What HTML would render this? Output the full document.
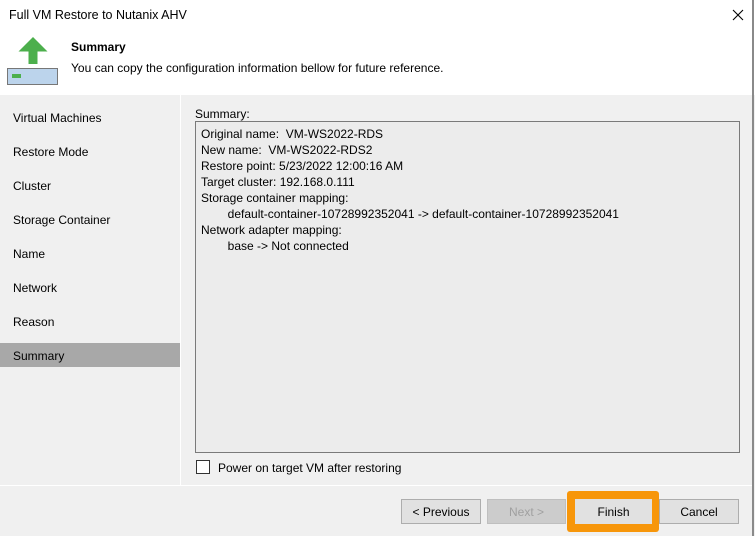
<!DOCTYPE html>
<html><head><style>
*{margin:0;padding:0;box-sizing:border-box}
body{width:755px;height:536px;overflow:hidden;background:#f0f0f0;font-family:"Liberation Sans",sans-serif;font-size:12px;color:#000;position:relative}
.a{position:absolute}
.nav div{position:absolute;left:13px}
.btn{position:absolute;top:499px;height:25px;border:1px solid #adadad;background:#e1e1e1;text-align:center;line-height:24px}
</style></head><body>
<div class="a" style="left:0;top:0;width:755px;height:95px;background:#fff"></div>
<div class="a" style="left:752px;top:0;width:2px;height:536px;background:#8a8a8a"></div>
<div class="a" style="left:9px;top:8px;font-size:12.5px">Full VM Restore to Nutanix AHV</div>
<svg class="a" style="left:731px;top:8px" width="14" height="14"><path d="M2 2L12 12M12 2L2 12" stroke="#000" stroke-width="1.1"/></svg>
<svg class="a" style="left:7px;top:36px" width="52" height="50">
<path d="M26 1L11.5 15.5H21.5V28H30.5V15.5H40.5Z" fill="#4caf4c"/>
<rect x="0.5" y="32.5" width="50" height="16" fill="#bcd4ec" stroke="#777"/>
<rect x="5" y="38" width="9" height="4" fill="#4caf4c"/>
</svg>
<div class="a" style="left:71px;top:40px;font-weight:bold">Summary</div>
<div class="a" style="left:71px;top:61px">You can copy the configuration information bellow for future reference.</div>
<div class="a" style="left:180px;top:95px;width:1px;height:390px;background:#fff"></div>
<div class="nav">
<div style="top:111px">Virtual Machines</div>
<div style="top:145px">Restore Mode</div>
<div style="top:179px">Cluster</div>
<div style="top:213px">Storage Container</div>
<div style="top:247px">Name</div>
<div style="top:281px">Network</div>
<div style="top:315px">Reason</div>
</div>
<div class="a" style="left:0;top:343px;width:180px;height:24px;background:#a8a8a8"></div>
<div class="a" style="left:13px;top:349px">Summary</div>
<div class="a" style="left:195px;top:107px">Summary:</div>
<div class="a" style="left:195px;top:121px;width:545px;height:332px;border:1px solid #7a7a7a;background:#ececec;line-height:16px;padding:4px 5px">
Original name:&nbsp; VM-WS2022-RDS<br>New name:&nbsp; VM-WS2022-RDS2<br>Restore point: 5/23/2022 12:00:16 AM<br>Target cluster: 192.168.0.111<br>Storage container mapping:<br>&nbsp;&nbsp;&nbsp;&nbsp;&nbsp;&nbsp;&nbsp;&nbsp;default-container-10728992352041 -&gt; default-container-10728992352041<br>Network adapter mapping:<br>&nbsp;&nbsp;&nbsp;&nbsp;&nbsp;&nbsp;&nbsp;&nbsp;base -&gt; Not connected
</div>
<div class="a" style="left:196px;top:460px;width:14px;height:14px;border:1px solid #333;background:#fff"></div>
<div class="a" style="left:218px;top:461px">Power on target VM after restoring</div>
<div class="a" style="left:0;top:485px;width:752px;height:1px;background:#fff"></div>
<div class="btn" style="left:401px;width:80px">&lt; Previous</div>
<div class="btn" style="left:487px;width:79px;background:#ccc;border-color:#bfbfbf;color:#a0a0a0">Next &gt;</div>
<div class="a" style="left:567px;top:491px;width:92px;height:41px;background:#f7960a;border-radius:3px"></div>
<div class="btn" style="left:575px;top:499px;width:77px;border-color:#e1e1e1">Finish</div>
<div class="btn" style="left:659px;width:80px">Cancel</div>
</body></html>
